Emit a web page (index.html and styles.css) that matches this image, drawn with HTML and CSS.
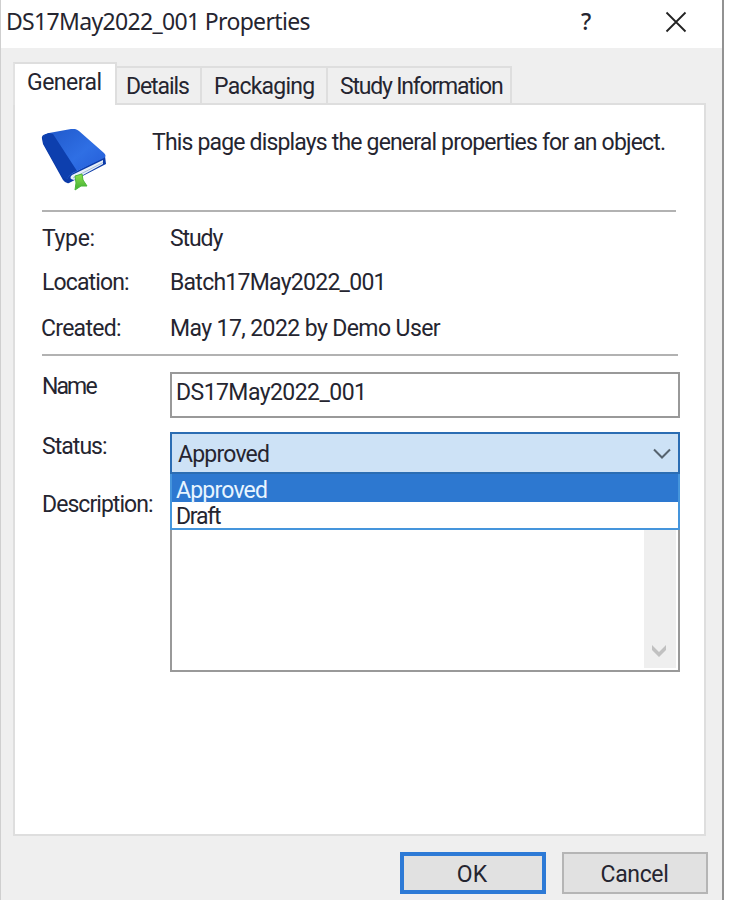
FILE: index.html
```
<!DOCTYPE html>
<html lang="en">
<head>
<meta charset="utf-8">
<title>DS17May2022_001 Properties</title>
<link rel="stylesheet" href="styles.css">
</head>
<body>
<main class="window">
  <header class="titlebar">
    <h1 class="title">DS17May2022_001 Properties</h1>
    <span class="help">?</span>
    <svg class="close" width="22" height="22" viewBox="0 0 22 22"><path d="M1.5 1.5 20.5 20.5M20.5 1.5 1.5 20.5"/></svg>
  </header>
  <nav class="tabs">
    <span class="tab active t-general">General</span>
    <span class="tab t-details">Details</span>
    <span class="tab t-packaging">Packaging</span>
    <span class="tab t-study">Study Information</span>
  </nav>
  <section class="panel">
    <div class="intro">
      <svg class="book" width="68" height="64" viewBox="0 0 68 64">
        <defs>
          <linearGradient id="cover" x1="0" y1="0" x2="1" y2="1"><stop offset="0" stop-color="#1f57c9"/><stop offset=".55" stop-color="#2f6fe4"/><stop offset="1" stop-color="#2259d6"/></linearGradient>
          <linearGradient id="leaf" x1="0" y1="0" x2="0" y2="1"><stop offset="0" stop-color="#8ee04f"/><stop offset="1" stop-color="#3fae32"/></linearGradient>
        </defs>
        <path d="M1 10Q0 6 5 5L30 45 64 27 65 35 28 54Q25 55 22 51L2 15Z" fill="#0b3aa8"/>
        <path d="M31 46 62 31 62 35 33 51Q27 50 31 46Z" fill="#e6eff9"/>
        <path d="M32 49 62 33.500" stroke="#a8bdd8" fill="none"/>
        <path d="M2 9Q3 5 8 4L30 0Q34-1 38 2L63 24Q66 27 63 29L34 43Q29 45 26 50Z" fill="url(#cover)"/>
        <path d="M2 9Q3 5 8 4L12 5 36 42Q29 44 26 50Q23 50 21 47L2 14Z" fill="#0d3fae"/>
        <path d="M34 47 41 45 42 51 46 57 40 57 34 61 35 54Z" fill="url(#leaf)" stroke="#4bb738"/>
      </svg>
      <p class="intro-text">This page displays the general properties for an object.</p>
    </div>
    <dl class="facts">
      <dt class="k-type">Type:</dt><dd class="v-type">Study</dd>
      <dt class="k-location">Location:</dt><dd class="v-location">Batch17May2022_001</dd>
      <dt class="k-created">Created:</dt><dd class="v-created">May 17, 2022 by Demo User</dd>
    </dl>
    <div class="form">
      <div class="labels">
        <span class="k-name">Name</span>
        <span class="k-status">Status:</span>
        <span class="k-description">Description:</span>
      </div>
      <div class="fields">
        <div class="input">DS17May2022_001</div>
        <div class="select">
          <span class="approved">Approved</span>
          <svg width="18" height="12" viewBox="0 0 18 12"><path d="M1 1.500 9 9.500 17 1.500"/></svg>
        </div>
        <div class="textarea">
          <div class="options">
            <div class="option selected">Approved</div>
            <div class="option draft">Draft</div>
          </div>
          <div class="scrollbar"><svg width="16" height="14" viewBox="0 0 16 14"><path d="M1 1 8 8 15 1V6L8 13 1 6Z"/></svg></div>
        </div>
      </div>
    </div>
  </section>
  <footer class="actions">
    <span class="button primary">OK</span>
    <span class="button cancel">Cancel</span>
  </footer>
</main>
</body>
</html>
```
FILE: styles.css
```
* { box-sizing: border-box; }
body { margin: 0; background: #fff; }
h1, p, dl, dd { margin: 0; }
svg { display: block; flex: none; }

.window {
  width: 724px;
  height: 900px;
  overflow: hidden;
  background: #efefef;
  border-left: 1px solid #cfcfcf;
  border-right: 2px solid #929292;
  color: #252530;
  font: 23px/28px Roboto, "Liberation Sans", sans-serif;
  white-space: nowrap;
}

.titlebar {
  display: flex;
  align-items: flex-start;
  height: 48px;
  padding: 7px 35px 0 5px;
  background: #fff;
}
.title {
  flex: 1;
  font: 23px/28px "Noto Sans", sans-serif;
  letter-spacing: -0.67px;
}
.help { width: 13px; margin-right: 71px; font: 500 23px/28px "Noto Sans", sans-serif; }
.close { margin-top: 4px; fill: none; stroke: #222; stroke-width: 1.8; }

.tabs {
  display: flex;
  align-items: flex-end;
  height: 55px;
  padding-left: 12px;
}
.tab {
  height: 37px;
  padding: 5px 0 0 12px;
  border: 2px solid #dedede;
  border-left: 0;
  border-bottom: 0;
}
.tab.active {
  position: relative;
  height: 43px;
  margin-bottom: -2px;
  padding: 5px 0 0 12px;
  border-left: 2px solid #e2e2e2;
  background: #fff;
}
.t-general { width: 104px; letter-spacing: -0.5px; }
.t-details { width: 85px; padding-left: 9px; letter-spacing: -1.09px; }
.t-packaging { width: 126px; letter-spacing: -0.75px; }
.t-study { width: 184px; letter-spacing: -1.2px; }

.panel {
  width: 693px;
  height: 733px;
  margin-left: 12px;
  border: 2px solid #dedede;
  background: #fff;
}
.intro {
  display: flex;
  gap: 43px;
  height: 107px;
  margin: 0 28px 0 27px;
  padding-top: 24px;
  border-bottom: 2px solid #b2b2b2;
}
.book { margin-left: -1px; }
.intro-text { letter-spacing: -0.83px; }

.facts {
  display: grid;
  grid-template-columns: 128px 1fr;
  grid-template-rows: 44px 46px 40px;
  height: 144px;
  margin: 0 26px 0 27px;
  padding-top: 13px;
  border-bottom: 2px solid #b2b2b2;
}
.k-type { letter-spacing: -0.35px; }
.v-type { letter-spacing: -1.1px; }
.k-location { letter-spacing: -0.87px; }
.v-location { letter-spacing: -0.74px; }
.k-created { margin-left: -1px; letter-spacing: -0.71px; }
.v-created { letter-spacing: -0.6px; }

.form {
  display: grid;
  grid-template-columns: 128px 510px;
  margin: 16px 0 0 27px;
}
.labels { display: grid; grid-template-rows: 60px 58px 28px; align-content: start; padding-top: 1px; }
.k-name { letter-spacing: -1.9px; }
.k-status { letter-spacing: -0.96px; }
.k-description { letter-spacing: -0.95px; }

.input {
  height: 46px;
  padding: 5px 0 0 4px;
  border: 2px solid #999;
  letter-spacing: -0.56px;
}
.select {
  display: flex;
  justify-content: space-between;
  height: 42px;
  margin-top: 14px;
  padding: 7px 7px 0 6px;
  border: 2px solid #2b6db3;
  background: #cde2f6;
}
.select svg { margin-top: 7px; fill: none; stroke: #56636f; stroke-width: 2; }
.approved { letter-spacing: -0.79px; }
.textarea {
  display: flex;
  flex-direction: column;
  height: 198px;
  border: 2px solid #999;
  border-top: 0;
}
.options { margin: 0 -2px; border: 2px solid #4595dc; border-top: 0; background: #fff; }
.option { height: 26px; padding-left: 4px; line-height: 29px; letter-spacing: -1.24px; }
.option.selected { height: 28px; background: #2d78d0; color: #e8f5ff; line-height: 33px; letter-spacing: -0.79px; }
.scrollbar {
  display: flex;
  flex: 1;
  align-self: flex-end;
  align-items: flex-end;
  justify-content: center;
  width: 32px;
  margin: 0 2px 2px 0;
  padding: 0 2px 10px 0;
  background: #efefef;
}
.scrollbar svg { fill: #c1c1c1; }

.actions { display: flex; gap: 16px; justify-content: flex-end; padding: 16px 14px 0 0; }
.button {
  width: 146px;
  height: 42px;
  border: 2px solid #b5b5b5;
  background: #e1e1e1;
  text-align: center;
  line-height: 41px;
}
.button.primary { border: 4px solid #2d7ad6; padding-right: 2px; line-height: 37px; }
.button.cancel { padding-right: 1px; letter-spacing: -0.35px; }
```
